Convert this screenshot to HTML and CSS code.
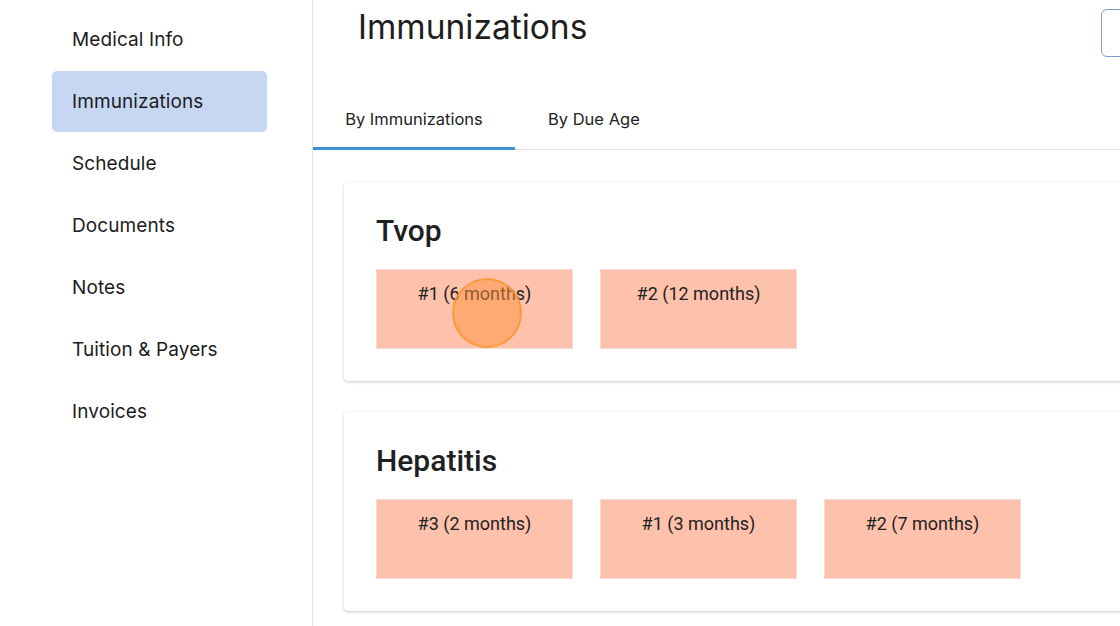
FILE: index.html
```html
<!DOCTYPE html>
<html>
<head>
<meta charset="utf-8">
<link rel="stylesheet" href="styles.css">
</head>
<body>
<div class="app">
  <nav class="sidebar">
    <a class="nav-item">Medical Info</a>
    <a class="nav-item active">Immunizations</a>
    <a class="nav-item">Schedule</a>
    <a class="nav-item">Documents</a>
    <a class="nav-item">Notes</a>
    <a class="nav-item">Tuition &amp; Payers</a>
    <a class="nav-item">Invoices</a>
  </nav>
  <main class="main">
    <header class="header">
      <h1 class="title">Immunizations</h1>
      <button class="header-btn"></button>
    </header>
    <div class="tabs">
      <div class="tab active">By Immunizations</div>
      <div class="tab">By Due Age</div>
    </div>
    <section class="content">
      <div class="card">
        <h2 class="card-title">Tvop</h2>
        <div class="tiles">
          <div class="tile">#1 (6 months)<span class="cursor"></span></div>
          <div class="tile">#2 (12 months)</div>
        </div>
      </div>
      <div class="card">
        <h2 class="card-title">Hepatitis</h2>
        <div class="tiles">
          <div class="tile">#3 (2 months)</div>
          <div class="tile">#1 (3 months)</div>
          <div class="tile">#2 (7 months)</div>
        </div>
      </div>
    </section>
  </main>
</div>
</body>
</html>
```

FILE: styles.css
```css
html, body {
  margin: 0;
  padding: 0;
  background: #fff;
  overflow: hidden;
}
.app {
  display: flex;
  width: 1120px;
  height: 626px;
  font-family: "Inter", "Lato", "Liberation Sans", sans-serif;
  color: #1a1a1a;
}
.sidebar {
  width: 313px;
  flex: none;
  border-right: 1px solid #e4e4e4;
  padding: 9px 0 0 52px;
  box-sizing: border-box;
  display: flex;
  flex-direction: column;
  gap: 1px;
}
.nav-item {
  display: flex;
  align-items: center;
  width: 215px;
  height: 61px;
  padding-left: 20px;
  box-sizing: border-box;
  font-size: 19px;
  letter-spacing: 0.1px;
  color: #1c1c1c;
  border-radius: 5px;
}
.nav-item.active {
  background: #c7d6f2;
}
.main {
  flex: 1;
  min-width: 0;
  display: flex;
  flex-direction: column;
}
.header {
  height: 86px;
  display: flex;
  align-items: flex-start;
  justify-content: space-between;
  padding-left: 45px;
}
.title {
  margin: 7px 0 0;
  font-size: 33.5px;
  font-weight: 400;
  color: #1e1e1e;
  letter-spacing: 0;
}
.header-btn {
  margin-top: 9px;
  width: 40px;
  height: 48px;
  margin-right: -21px;
  border: 1.5px solid #7f9bcc;
  border-radius: 6px;
  background: #fff;
}
.tabs {
  display: flex;
  border-bottom: 1px solid #e0e0e0;
  height: 64px;
  box-sizing: border-box;
}
.tab {
  display: flex;
  align-items: center;
  justify-content: center;
  padding: 4px 32px 0 33px;
  font-size: 16.5px;
  color: #222;
  margin-bottom: -1px;
  border-bottom: 3px solid transparent;
}
.tab.active {
  border-bottom-color: #3b8fd9;
  width: 202px;
  box-sizing: border-box;
  padding: 4px 0 0;
}
.content {
  padding: 32px 0 0 31px;
  display: flex;
  flex-direction: column;
  gap: 31px;
}
.card {
  background: #fff;
  border-radius: 4px;
  box-shadow: 0 1px 3px rgba(0,0,0,0.22), 0 0 1px rgba(0,0,0,0.06);
  padding: 31px 0 32px 32px;
  width: 820px;
  box-sizing: border-box;
  font-family: "Roboto", "Liberation Sans", sans-serif;
}
.card-title {
  margin: 0 0 20px;
  font-size: 30px;
  font-weight: 500;
  line-height: 36px;
  color: #1f1f1f;
}
.tiles {
  display: flex;
  gap: 27px;
}
.tile {
  position: relative;
  width: 197px;
  height: 80px;
  box-sizing: border-box;
  background: #fec1ab;
  border: 1px solid #f0dcd4;
  text-align: center;
  padding-top: 13px;
  font-size: 18px;
  color: #222;
}
.cursor {
  position: absolute;
  left: 75px;
  top: 8px;
  width: 70px;
  height: 70px;
  border-radius: 50%;
  box-sizing: border-box;
  background: rgba(255, 146, 62, 0.5);
  border: 2px solid rgba(250, 150, 50, 0.85);
}
```
